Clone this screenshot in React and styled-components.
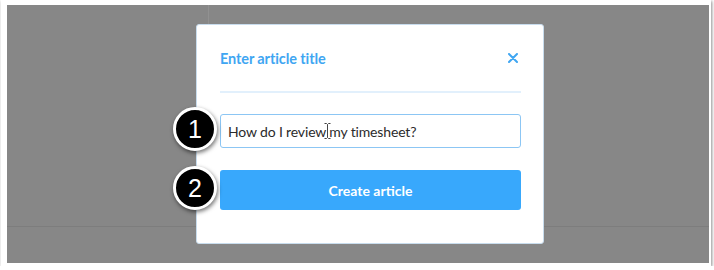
import React from 'react';
import styled, { createGlobalStyle } from 'styled-components';

const colors = {
  backdrop: '#878787',
  blue: '#3fa6f2',
  button: '#38a8fc',
  inputBorder: '#8cc6f4',
  divider: '#e2f0fc',
  text: '#2b2b2b',
};

const GlobalStyle = createGlobalStyle`
  html, body {
    margin: 0;
    background: #fff;
  }
  body {
    font-family: Lato, "Open Sans", sans-serif;
  }
`;

const Frame = styled.div`
  position: relative;
  box-sizing: border-box;
  width: 710px;
  height: 266px;
  margin-left: 1px;
  padding: 5px 2px 3px 6px;
  background: #fff;
  box-shadow: 1px 1px 3px rgba(0, 0, 0, 0.45);
`;

const Backdrop = styled.div`
  position: relative;
  display: grid;
  grid-template-columns: 202px 1fr;
  grid-template-rows: 1fr 37px;
  height: 100%;
  background: ${colors.backdrop};
`;

const SideColumn = styled.div`
  border-right: 1px solid rgba(255, 255, 255, 0.09);
`;

const Footer = styled.div`
  grid-column: 1 / span 2;
  border-top: 1px solid rgba(0, 0, 0, 0.07);
`;

const Modal = styled.div`
  position: absolute;
  left: 189px;
  top: 19px;
  box-sizing: border-box;
  width: 348px;
  padding: 0 22px 33px 23px;
  background: #fff;
  border: 1px solid #c8dced;
  border-radius: 3px;
  display: flex;
  flex-direction: column;
`;

const Header = styled.div`
  display: flex;
  align-items: center;
  justify-content: space-between;
  height: 66px;
  border-bottom: 2px solid ${colors.divider};
`;

const Title = styled.h2`
  margin: 0;
  font-size: 14.5px;
  font-weight: 700;
  color: ${colors.blue};
  letter-spacing: -0.1px;
`;

const Close = styled.button`
  display: flex;
  padding: 0;
  margin-right: 3px;
  border: 0;
  background: none;
  cursor: pointer;
`;

const Step = styled.div`
  position: relative;
  margin-top: ${props => props.gap}px;
`;

const Badge = styled.span`
  position: absolute;
  left: -47px;
  top: 50%;
  transform: translateY(calc(-50% - 2px));
  box-sizing: border-box;
  width: 44px;
  height: 44px;
  border-radius: 50%;
  border: 3px solid #fff;
  background: #000;
  box-shadow: 1px 2px 4px rgba(0, 0, 0, 0.55);
  display: flex;
  align-items: center;
  justify-content: center;
  color: #fff;
  font-family: "Liberation Sans", Arial, sans-serif;
  font-size: 25px;
  line-height: 1;
`;

const Input = styled.input`
  display: block;
  box-sizing: border-box;
  width: 100%;
  height: 34px;
  padding: 0 7px;
  border: 1px solid ${colors.inputBorder};
  border-radius: 3px;
  font-family: Lato, "Open Sans", sans-serif;
  font-size: 14px;
  letter-spacing: -0.15px;
  color: ${colors.text};
  outline: none;
`;

const Cursor = styled.svg`
  position: absolute;
  left: 104px;
  top: 9px;
`;

const Button = styled.button`
  display: block;
  width: 100%;
  height: 40px;
  border: 0;
  border-radius: 3px;
  background: ${colors.button};
  color: #fff;
  font-family: Lato, "Open Sans", sans-serif;
  font-size: 14px;
  font-weight: 700;
  cursor: pointer;
`;

export default function App() {
  return (
    <>
      <GlobalStyle />
      <Frame>
        <Backdrop>
          <SideColumn />
          <div />
          <Footer />
          <Modal>
            <Header>
              <Title>Enter article title</Title>
              <Close aria-label="Close">
                <svg width="10" height="10" viewBox="0 0 10 10">
                  <path d="M1 1L9 9M9 1L1 9" stroke={colors.blue} strokeWidth="2" strokeLinecap="round" />
                </svg>
              </Close>
            </Header>
            <Step gap={21}>
              <Badge>1</Badge>
              <Input defaultValue="How do I review my timesheet?" />
              <Cursor width="7" height="16" viewBox="0 0 7 16">
                <path d="M0.5 0.5H2.5L3.5 1.5L4.5 0.5H6.5M3.5 1.5V14.5M0.5 15.5H2.5L3.5 14.5L4.5 15.5H6.5" stroke="#444" strokeWidth="1" fill="none" />
              </Cursor>
            </Step>
            <Step gap={22}>
              <Badge>2</Badge>
              <Button>Create article</Button>
            </Step>
          </Modal>
        </Backdrop>
      </Frame>
    </>
  );
}
